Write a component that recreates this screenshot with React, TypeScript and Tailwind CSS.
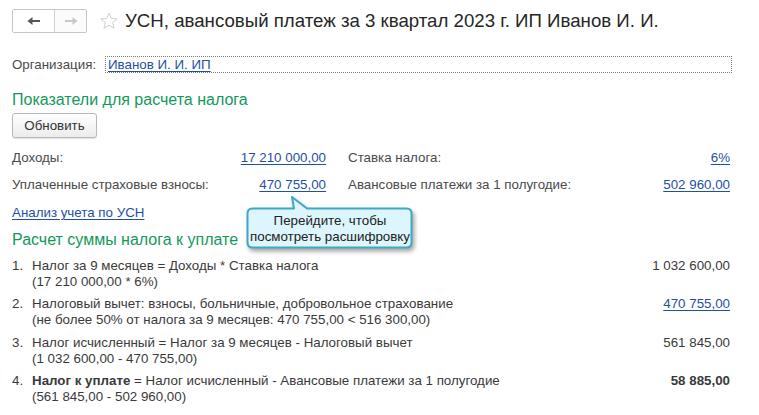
import React from 'react';

const linkCls = 'text-[#1f4fa6] underline underline-offset-[2px] decoration-[#1f4fa6]';

function NavButtons() {
  return (
    <div className="flex h-[24px] border border-[#c6c6c6] rounded-[2px] overflow-hidden">
      <button className="w-[42px] h-full flex items-center justify-center bg-white border-r border-[#d0d0d0]">
        <svg width="14" height="10" viewBox="0 0 14 10">
          <path d="M0.5 5 L5.5 1 V4 H13 V6 H5.5 V9 Z" fill="#555" />
        </svg>
      </button>
      <button className="w-[31px] h-full flex items-center justify-center bg-[#fbfbfb]">
        <svg width="14" height="10" viewBox="0 0 14 10">
          <path d="M13.5 5 L8.5 1 V4 H1 V6 H8.5 V9 Z" fill="#c8c8c8" />
        </svg>
      </button>
    </div>
  );
}

function Star() {
  return (
    <svg width="20" height="20" viewBox="0 0 24 24" className="ml-[12px]">
      <path
        d="M12 2.5 L14.8 9 L21.8 9.4 L16.4 13.9 L18.1 20.8 L12 17 L5.9 20.8 L7.6 13.9 L2.2 9.4 L9.2 9 Z"
        fill="none"
        stroke="#cfcfcf"
        strokeWidth="1.2"
        strokeLinejoin="round"
      />
    </svg>
  );
}

function Tooltip() {
  return (
    <>
      <svg
        width="172"
        height="60"
        viewBox="0 0 172 60"
        className="absolute left-[245px] top-[195px] drop-shadow-[2px_3px_2px_rgba(0,0,0,0.35)]"
      >
        <path
          d="M7.5 13.5 H49 L47 2 L62 13.5 H161.5 Q166.5 13.5 166.5 18.5 V47.5 Q166.5 52.5 161.5 52.5 H7.5 Q2.5 52.5 2.5 47.5 V18.5 Q2.5 13.5 7.5 13.5 Z"
          fill="#ddf5fc"
          stroke="#3ea8c6"
          strokeWidth="2"
          strokeLinejoin="round"
        />
      </svg>
      <div className="absolute left-[247px] top-[209px] w-[166px] h-[39px] flex flex-col items-center justify-center text-[13.33px] leading-[16px] text-[#222]">
        <span>Перейдите, чтобы</span>
        <span>посмотреть расшифровку</span>
      </div>
    </>
  );
}

const steps = [
  {
    n: '1.',
    line1: <>Налог за 9 месяцев = Доходы * Ставка налога</>,
    line2: '(17 210 000,00 * 6%)',
    value: <span>1 032 600,00</span>,
    mt: 'mt-[8px]',
  },
  {
    n: '2.',
    line1: <>Налоговый вычет: взносы, больничные, добровольное страхование</>,
    line2: '(не более 50% от налога за 9 месяцев: 470 755,00 < 516 300,00)',
    value: <a className={linkCls}>470 755,00</a>,
    mt: 'mt-[6px]',
  },
  {
    n: '3.',
    line1: <>Налог исчисленный = Налог за 9 месяцев - Налоговый вычет</>,
    line2: '(1 032 600,00 - 470 755,00)',
    value: <span>561 845,00</span>,
    mt: 'mt-[7px]',
  },
  {
    n: '4.',
    line1: (
      <>
        <b className="font-bold">Налог к уплате</b> = Налог исчисленный - Авансовые платежи за 1 полугодие
      </>
    ),
    line2: '(561 845,00 - 502 960,00)',
    value: <b className="font-bold">58 885,00</b>,
    mt: 'mt-[6px]',
  },
];

export default function App() {
  return (
    <div className="relative w-[759px] h-[415px] bg-white overflow-hidden font-['Arial','Liberation_Sans',sans-serif] text-[13.33px] text-[#3a3a3a]">
      {/* Заголовок */}
      <div className="flex items-center pl-[12px] pt-[9px] h-[33px]">
        <NavButtons />
        <Star />
        <h1 className="ml-[6px] text-[18.67px] leading-[24px] text-[#262626]">
          УСН, авансовый платеж за 3 квартал 2023 г. ИП Иванов И. И.
        </h1>
      </div>

      {/* Организация */}
      <div className="flex items-center mt-[23px] pl-[12px] pr-[27px] h-[17px]">
        <span className="w-[93px] text-[#4a4a4a]">Организация:</span>
        <div className="flex-1 h-[17px] border border-dotted border-[#7a7a7a] flex items-center px-[2px] leading-[15px]">
          <a className={linkCls}>Иванов И. И. ИП</a>
        </div>
      </div>

      <div className="pl-[12px] mt-[17px] text-[16px] leading-[20px] text-[#12995a]">
        Показатели для расчета налога
      </div>

      <div className="pl-[12px] mt-[3px]">
        <button className="w-[85px] h-[25px] rounded-[3px] border border-[#b9b9b9] bg-gradient-to-b from-white to-[#ececec] shadow-[0_1px_1px_rgba(0,0,0,0.12)] text-[13.33px] text-[#333]">
          Обновить
        </button>
      </div>

      {/* Показатели */}
      <div className="pl-[12px] mt-[11px] flex flex-col gap-[9px]">
        <div className="flex h-[18px] items-center">
          <div className="w-[314px] flex justify-between">
            <span className="text-[#4a4a4a]">Доходы:</span>
            <a className={linkCls}>17 210 000,00</a>
          </div>
          <div className="ml-[22px] w-[382px] flex justify-between">
            <span className="text-[#4a4a4a]">Ставка налога:</span>
            <a className={linkCls}>6%</a>
          </div>
        </div>
        <div className="flex h-[18px] items-center">
          <div className="w-[314px] flex justify-between">
            <span className="text-[#4a4a4a]">Уплаченные страховые взносы:</span>
            <a className={linkCls}>470 755,00</a>
          </div>
          <div className="ml-[22px] w-[382px] flex justify-between">
            <span className="text-[#4a4a4a]">Авансовые платежи за 1 полугодие:</span>
            <a className={linkCls}>502 960,00</a>
          </div>
        </div>
      </div>

      <div className="pl-[12px] mt-[10px] h-[18px] flex items-center">
        <a className={linkCls}>Анализ учета по УСН</a>
      </div>

      <div className="pl-[12px] mt-[8px] text-[16px] leading-[20px] text-[#12995a]">
        Расчет суммы налога к уплате
      </div>

      {/* Расчет */}
      <div className="pl-[12px] w-[730px] flex flex-col">
        {steps.map((s) => (
          <div key={s.n} className={`flex leading-[16px] ${s.mt}`}>
            <span className="w-[20px]">{s.n}</span>
            <div className="flex-1 flex flex-col">
              <span>{s.line1}</span>
              <span>{s.line2}</span>
            </div>
            <div className="text-right">{s.value}</div>
          </div>
        ))}
      </div>

      <Tooltip />
    </div>
  );
}
